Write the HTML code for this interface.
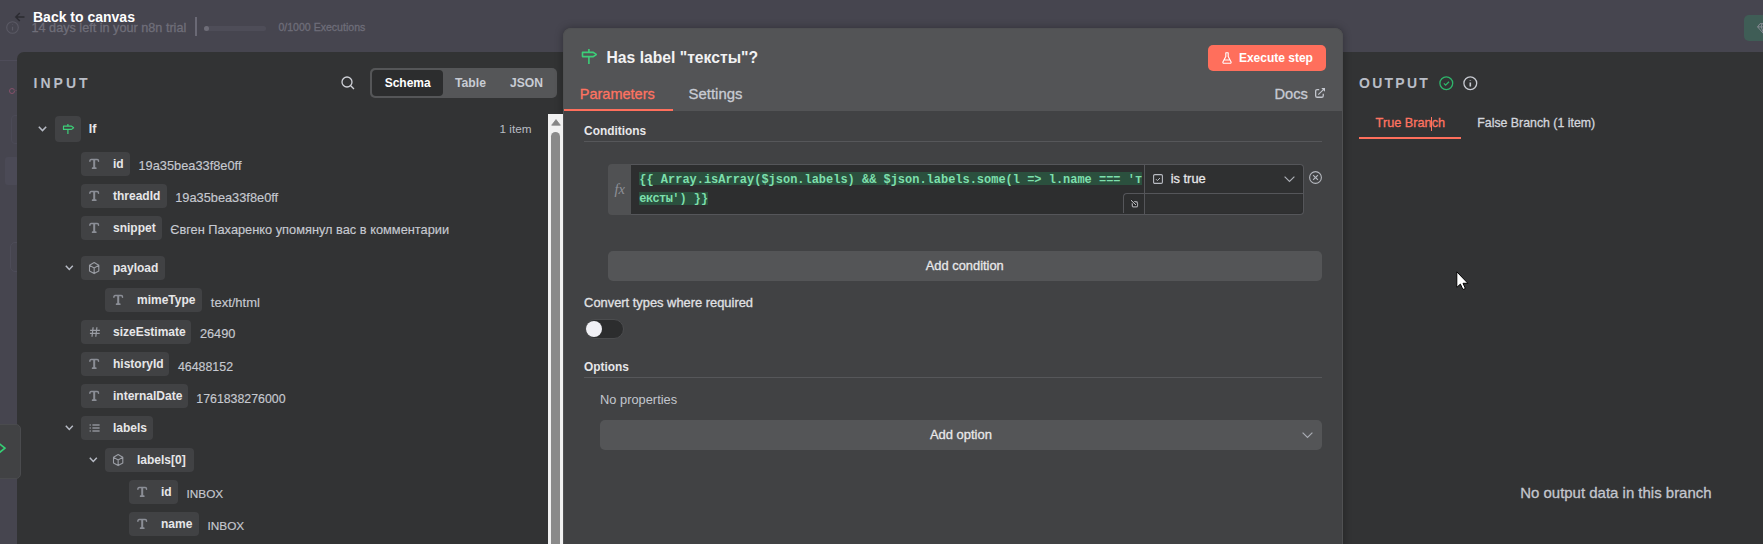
<!DOCTYPE html>
<html><head><meta charset="utf-8">
<style>
*{box-sizing:border-box;margin:0;padding:0}
html,body{width:1763px;height:544px;overflow:hidden;background:#46454f;font-family:"Liberation Sans",sans-serif}
.a{position:absolute;white-space:nowrap;line-height:1}
.b{font-weight:700}
svg{position:absolute;overflow:visible}
#left{position:absolute;left:17px;top:52px;width:560px;height:520px;background:#323334;border-top-left-radius:7px}
#right{position:absolute;left:1343px;top:52px;width:440px;height:520px;background:#323334}
#center{position:absolute;left:563px;top:28px;width:780px;height:540px;background:#414244;border-radius:8px 8px 0 0;box-shadow:0 0 9px rgba(0,0,0,.3);overflow:hidden}
#chead{position:absolute;left:0;top:0;width:780px;height:83px;background:#535456}
.pill{position:absolute;height:24px;background:#414244;border-radius:4px}
.key{font-size:12px;font-weight:700;color:#e6e6e8}
.val{font-size:12.8px;color:#c6c9d0;-webkit-text-stroke:0.15px currentColor}
.m{-webkit-text-stroke:0.3px currentColor}
.btn{position:absolute;background:#545557;border-radius:5px}
</style></head><body>

<!-- top canvas bar -->
<svg style="left:15px;top:12px" width="10" height="10" viewBox="0 0 10 10"><path d="M9.5 5H0.8M4.8 1L0.8 5L4.8 9" stroke="#2b2b31" stroke-width="1.4" fill="none"/></svg>
<svg style="left:6px;top:21px" width="13" height="13" viewBox="0 0 13 13"><circle cx="6.5" cy="6.5" r="5.8" stroke="#5a5964" stroke-width="1.1" fill="none"/><path d="M6.5 5.8v3.6M6.5 3.6v.4" stroke="#5a5964" stroke-width="1.2"/></svg>
<div class="a b" style="left:33px;top:10px;font-size:14px;color:#ffffff">Back to canvas</div>
<div class="a m" style="left:31.5px;top:22.1px;font-size:12.67px;color:#6f6e79">14 days left in your n8n trial</div>
<div class="a" style="left:195px;top:16.5px;width:1.5px;height:19.5px;background:#6a6975"></div>
<div class="a" style="left:204px;top:26.2px;width:62px;height:4.5px;border-radius:3px;background:#4e4d58"></div>
<div class="a" style="left:204px;top:26px;width:5px;height:5px;border-radius:3px;background:#6e6d78"></div>
<div class="a m" style="left:278.4px;top:22.3px;font-size:10.57px;color:#6e6d79">0/1000 Executions</div>
<div class="a" style="left:1744px;top:14.8px;width:30px;height:26px;border-radius:5px;background:#3f5d56"></div>
<svg style="left:1756.5px;top:22.5px" width="14" height="12" viewBox="0 0 14 12"><path d="M0.6 3.9L3 0.7H11L13.4 3.9L7 11.2Z M0.6 3.9H13.4M5 0.7L4.2 3.9L7 11.2M9 0.7L9.8 3.9L7 11.2" stroke="#8f8f9a" stroke-width="0.9" fill="none" stroke-linejoin="round"/></svg>

<!-- faint canvas bits -->
<div class="a" style="left:9px;top:87.7px;width:6px;height:6px;border-radius:50%;border:1.5px solid #87506a"></div>
<div class="a" style="left:14px;top:89.7px;width:4px;height:1.2px;background:#5c4a58"></div>
<div class="a" style="left:11px;top:115.3px;width:12px;height:29px;border-radius:4px;border:1px solid #4b4a56"></div>
<div class="a" style="left:5px;top:157px;width:14px;height:28px;border-radius:3px;background:#4b4a56"></div>
<div class="a" style="left:10px;top:242px;width:12px;height:30px;border-radius:5px;border:1px solid #4d4c58"></div>
<div class="a" style="left:0;top:60px;width:17px;height:1px;background:#4e4c59"></div>
<!-- left input panel -->
<div id="left"></div>
<div class="a b" style="left:33.6px;top:76.2px;font-size:14px;letter-spacing:3px;color:#b9bdc6">INPUT</div>
<svg style="left:341px;top:76px" width="14" height="14" viewBox="0 0 14 14"><circle cx="6" cy="6" r="5" stroke="#d0d2d8" stroke-width="1.3" fill="none"/><path d="M9.7 9.7L13 13" stroke="#d0d2d8" stroke-width="1.3"/></svg>
<div class="a" style="left:370px;top:68px;width:187px;height:30px;border-radius:5px;background:#555658"></div>
<div class="a" style="left:372px;top:70px;width:71px;height:26px;border-radius:4px;background:#2c2d2e"></div>
<div class="a b" style="left:384.7px;top:77.1px;font-size:12px;color:#ffffff">Schema</div>
<div class="a b" style="left:455px;top:77.1px;font-size:12.2px;color:#c8ccd4">Table</div>
<div class="a b" style="left:510px;top:77.1px;font-size:12.1px;color:#c8ccd4">JSON</div>

<!-- tree -->
<svg style="left:37.5px;top:126.3px" width="9" height="6" viewBox="0 0 9 6"><path d="M0.8 0.8L4.5 4.6L8.2 0.8" stroke="#b8bcc6" stroke-width="1.5" fill="none"/></svg>
<div class="pill" style="left:55px;top:116px;width:26px;height:26px"></div>
<svg style="left:62px;top:122px" width="13" height="13" viewBox="0 0 13 13"><path d="M5.9 1.9V4.2M5.9 7.4V11.9M1.5 4.2H9.6L11.6 5.8L9.6 7.4H1.5Z" stroke="#3ccf78" stroke-width="1.2" fill="none" stroke-linejoin="round"/></svg>
<div class="a b" style="left:88.8px;top:122.8px;font-size:12.5px;color:#e6e6e8">If</div>
<div class="a" style="left:499.5px;top:123.2px;font-size:11.75px;color:#b9bcc3">1 item</div>

<div id="tree">
<div class="pill" style="left:81px;top:152px;width:49px"></div>
<svg style="left:88.9px;top:158px" width="11" height="12" viewBox="0 0 11 12"><path d="M0.9 3.2V2.9Q0.9 1.6 2.2 1.6H8.2Q9.5 1.6 9.5 2.9V3.2" stroke="#8b8e96" stroke-width="1.5" fill="none" stroke-linecap="round"/><path d="M5.2 1.8V10.3" stroke="#8b8e96" stroke-width="2"/><path d="M3.6 10.2H6.8" stroke="#8b8e96" stroke-width="1.7" stroke-linecap="round"/></svg>
<div class="a key" style="left:113px;top:158.14px">id</div>
<div class="a val" style="left:138.5px;top:160.26px;font-size:12.8px">19a35bea33f8e0ff</div>
<div class="pill" style="left:81px;top:184px;width:85.6px"></div>
<svg style="left:88.9px;top:190px" width="11" height="12" viewBox="0 0 11 12"><path d="M0.9 3.2V2.9Q0.9 1.6 2.2 1.6H8.2Q9.5 1.6 9.5 2.9V3.2" stroke="#8b8e96" stroke-width="1.5" fill="none" stroke-linecap="round"/><path d="M5.2 1.8V10.3" stroke="#8b8e96" stroke-width="2"/><path d="M3.6 10.2H6.8" stroke="#8b8e96" stroke-width="1.7" stroke-linecap="round"/></svg>
<div class="a key" style="left:113px;top:190.14px">threadId</div>
<div class="a val" style="left:175.2px;top:192.26px;font-size:12.8px">19a35bea33f8e0ff</div>
<div class="pill" style="left:81px;top:216px;width:80.5px"></div>
<svg style="left:88.9px;top:222px" width="11" height="12" viewBox="0 0 11 12"><path d="M0.9 3.2V2.9Q0.9 1.6 2.2 1.6H8.2Q9.5 1.6 9.5 2.9V3.2" stroke="#8b8e96" stroke-width="1.5" fill="none" stroke-linecap="round"/><path d="M5.2 1.8V10.3" stroke="#8b8e96" stroke-width="2"/><path d="M3.6 10.2H6.8" stroke="#8b8e96" stroke-width="1.7" stroke-linecap="round"/></svg>
<div class="a key" style="left:113px;top:222.14px">snippet</div>
<div class="a val" style="left:170.2px;top:224.26px;font-size:12.8px">Євген Пахаренко упомянул вас в комментарии</div>
<div class="pill" style="left:81px;top:256px;width:84px"></div>
<svg style="left:88.9px;top:261.5px" width="11" height="12" viewBox="0 0 11 12"><path d="M5.15 0.6L9.8 3.3V8.9L5.15 11.6L0.5 8.9V3.3Z M0.7 3.4L5.15 6L9.6 3.4 M5.15 6V11.4" stroke="#9a9da4" stroke-width="1.1" fill="none" stroke-linejoin="round"/></svg>
<div class="a key" style="left:113px;top:262.14px">payload</div>
<svg style="left:64.7px;top:264.5px" width="9" height="6" viewBox="0 0 9 6"><path d="M0.8 0.8L4.3 4.4L7.8 0.8" stroke="#b8bcc6" stroke-width="1.5" fill="none"/></svg>
<div class="pill" style="left:105px;top:288px;width:96.7px"></div>
<svg style="left:112.9px;top:294px" width="11" height="12" viewBox="0 0 11 12"><path d="M0.9 3.2V2.9Q0.9 1.6 2.2 1.6H8.2Q9.5 1.6 9.5 2.9V3.2" stroke="#8b8e96" stroke-width="1.5" fill="none" stroke-linecap="round"/><path d="M5.2 1.8V10.3" stroke="#8b8e96" stroke-width="2"/><path d="M3.6 10.2H6.8" stroke="#8b8e96" stroke-width="1.7" stroke-linecap="round"/></svg>
<div class="a key" style="left:137px;top:294.14px">mimeType</div>
<div class="a val" style="left:210.8px;top:296.10px;font-size:13.0px">text/html</div>
<div class="pill" style="left:81px;top:320px;width:110px"></div>
<svg style="left:88.9px;top:326px" width="11" height="12" viewBox="0 0 11 12"><path d="M4.1 1.2L3.0 10.8M7.9 1.2L6.8 10.8M1.1 4.3H10.9M0.9 7.3H10.7" stroke="#9a9da4" stroke-width="1.2" fill="none"/></svg>
<div class="a key" style="left:113px;top:326.14px">sizeEstimate</div>
<div class="a val" style="left:199.9px;top:328.26px;font-size:12.8px">26490</div>
<div class="pill" style="left:81px;top:352px;width:87.8px"></div>
<svg style="left:88.9px;top:358px" width="11" height="12" viewBox="0 0 11 12"><path d="M0.9 3.2V2.9Q0.9 1.6 2.2 1.6H8.2Q9.5 1.6 9.5 2.9V3.2" stroke="#8b8e96" stroke-width="1.5" fill="none" stroke-linecap="round"/><path d="M5.2 1.8V10.3" stroke="#8b8e96" stroke-width="2"/><path d="M3.6 10.2H6.8" stroke="#8b8e96" stroke-width="1.7" stroke-linecap="round"/></svg>
<div class="a key" style="left:113px;top:358.14px">historyId</div>
<div class="a val" style="left:177.9px;top:360.60px;font-size:12.4px">46488152</div>
<div class="pill" style="left:81px;top:384px;width:107px"></div>
<svg style="left:88.9px;top:390px" width="11" height="12" viewBox="0 0 11 12"><path d="M0.9 3.2V2.9Q0.9 1.6 2.2 1.6H8.2Q9.5 1.6 9.5 2.9V3.2" stroke="#8b8e96" stroke-width="1.5" fill="none" stroke-linecap="round"/><path d="M5.2 1.8V10.3" stroke="#8b8e96" stroke-width="2"/><path d="M3.6 10.2H6.8" stroke="#8b8e96" stroke-width="1.7" stroke-linecap="round"/></svg>
<div class="a key" style="left:113px;top:390.14px">internalDate</div>
<div class="a val" style="left:196.3px;top:392.65px;font-size:12.35px">1761838276000</div>
<div class="pill" style="left:81px;top:416px;width:71.8px"></div>
<svg style="left:88.9px;top:422px" width="11" height="12" viewBox="0 0 11 12"><path d="M3.4 3H10.6M3.4 6H10.6M3.4 9H10.6M0.6 3H1.8M0.6 6H1.8M0.6 9H1.8" stroke="#8e9198" stroke-width="1.6" fill="none"/></svg>
<div class="a key" style="left:113px;top:422.14px">labels</div>
<svg style="left:64.7px;top:424.5px" width="9" height="6" viewBox="0 0 9 6"><path d="M0.8 0.8L4.3 4.4L7.8 0.8" stroke="#b8bcc6" stroke-width="1.5" fill="none"/></svg>
<div class="pill" style="left:105px;top:448px;width:89px"></div>
<svg style="left:112.9px;top:453.5px" width="11" height="12" viewBox="0 0 11 12"><path d="M5.15 0.6L9.8 3.3V8.9L5.15 11.6L0.5 8.9V3.3Z M0.7 3.4L5.15 6L9.6 3.4 M5.15 6V11.4" stroke="#9a9da4" stroke-width="1.1" fill="none" stroke-linejoin="round"/></svg>
<div class="a key" style="left:137px;top:454.14px">labels[0]</div>
<svg style="left:88.7px;top:456.5px" width="9" height="6" viewBox="0 0 9 6"><path d="M0.8 0.8L4.3 4.4L7.8 0.8" stroke="#b8bcc6" stroke-width="1.5" fill="none"/></svg>
<div class="pill" style="left:129px;top:480px;width:48.6px"></div>
<svg style="left:136.9px;top:486px" width="11" height="12" viewBox="0 0 11 12"><path d="M0.9 3.2V2.9Q0.9 1.6 2.2 1.6H8.2Q9.5 1.6 9.5 2.9V3.2" stroke="#8b8e96" stroke-width="1.5" fill="none" stroke-linecap="round"/><path d="M5.2 1.8V10.3" stroke="#8b8e96" stroke-width="2"/><path d="M3.6 10.2H6.8" stroke="#8b8e96" stroke-width="1.7" stroke-linecap="round"/></svg>
<div class="a key" style="left:161px;top:486.14px">id</div>
<div class="a val" style="left:186.5px;top:489.11px;font-size:11.8px">INBOX</div>
<div class="pill" style="left:129px;top:512px;width:70px"></div>
<svg style="left:136.9px;top:518px" width="11" height="12" viewBox="0 0 11 12"><path d="M0.9 3.2V2.9Q0.9 1.6 2.2 1.6H8.2Q9.5 1.6 9.5 2.9V3.2" stroke="#8b8e96" stroke-width="1.5" fill="none" stroke-linecap="round"/><path d="M5.2 1.8V10.3" stroke="#8b8e96" stroke-width="2"/><path d="M3.6 10.2H6.8" stroke="#8b8e96" stroke-width="1.7" stroke-linecap="round"/></svg>
<div class="a key" style="left:161px;top:518.14px">name</div>
<div class="a val" style="left:207.5px;top:521.11px;font-size:11.8px">INBOX</div>
</div><!--/tree-->

<!-- right output panel -->
<div id="right"></div>
<div class="a b" style="left:1359px;top:76.2px;font-size:14px;letter-spacing:2.25px;color:#b9bdc6">OUTPUT</div>
<svg style="left:1438.8px;top:76px" width="15" height="15" viewBox="0 0 15 15"><circle cx="7.3" cy="7.2" r="6.4" stroke="#2fb56b" stroke-width="1.3" fill="none"/><path d="M4.9 7.4l1.7 1.7 3.4-3.4" stroke="#2fb56b" stroke-width="1.3" fill="none"/></svg>
<svg style="left:1462.8px;top:76px" width="15" height="15" viewBox="0 0 15 15"><circle cx="7.3" cy="7.2" r="6.4" stroke="#c8cbd2" stroke-width="1.3" fill="none"/><path d="M7.3 6.5v4M7.3 4.2v.6" stroke="#c8cbd2" stroke-width="1.6"/></svg>
<div class="a m" style="left:1375.6px;top:117px;font-size:12.72px;color:#ff7361">True Branch</div>
<div class="a" style="left:1430.5px;top:117px;width:1px;height:13.5px;background:#ff7361"></div>
<div class="a m" style="left:1477.3px;top:117.3px;font-size:12.34px;color:#d3d6dd">False Branch (1 item)</div>
<div class="a" style="left:1359px;top:136.7px;width:102px;height:2.3px;background:#ff6f5c"></div>
<div class="a m" style="left:1520.2px;top:485.5px;font-size:14.97px;color:#c3c6ce">No output data in this branch</div>
<svg style="left:1455.6px;top:270.6px" width="13" height="20" viewBox="0 0 13 20"><path d="M0.8 0.8V16.4L4.4 13.1L6.9 18.5L9.4 17.5L7 12.3H11.9Z" fill="#ffffff" stroke="#000" stroke-width="1" stroke-linejoin="round"/></svg>

<!-- center -->
<div id="center">
  <div id="chead"></div>
  <svg style="left:18px;top:20.5px" width="17" height="16" viewBox="0 0 17 16"><path d="M7.9 0.1V3.4M7.9 7.6V14.9M1.5 3.4H12.3L15.2 5.5L12.3 7.6H1.5Z" stroke="#3ccf78" stroke-width="1.6" fill="none" stroke-linejoin="round"/></svg>
  <div class="a b" style="left:43.5px;top:21.6px;font-size:15.7px;color:#f2f2f3">Has label "тексты"?</div>
  <div class="a" style="left:645px;top:17px;width:118px;height:26px;border-radius:5px;background:#ff6f5c"></div>
  <svg style="left:659px;top:24px" width="10" height="12" viewBox="0 0 10 12"><path d="M3.5 0.8h3M3.8 0.8v3.6L0.9 10a1 1 0 0 0 .9 1.3h6.4a1 1 0 0 0 .9-1.3L6.2 4.4V0.8M1.9 8h6.2" stroke="#fff" stroke-width="1.1" fill="none" stroke-linejoin="round"/></svg>
  <div class="a b" style="left:675.9px;top:23.9px;font-size:12px;color:#ffffff">Execute step</div>
  <div class="a m" style="left:16.8px;top:58.7px;font-size:14.5px;color:#ff7361">Parameters</div>
  <div class="a m" style="left:125.6px;top:59.4px;font-size:14.9px;color:#c8cbd3">Settings</div>
  <div class="a" style="left:0;top:81px;width:110px;height:2px;background:#ff6f5c"></div>
  <div class="a m" style="left:711.4px;top:58.8px;font-size:14.7px;color:#c8cbd3">Docs</div>
  <svg style="left:752px;top:60px" width="11" height="11" viewBox="0 0 11 11"><path d="M4.2 1.65H2.2Q0.65 1.65 0.65 3.2V7.7Q0.65 9.25 2.2 9.25H6.7Q8.25 9.25 8.25 7.7V5.8" stroke="#c3c6cd" stroke-width="1.3" fill="none"/><path d="M3.3 6.6L8.6 1.3" stroke="#c3c6cd" stroke-width="1.1"/><path d="M6.3 0H10V3.7Z" fill="#c8cbd3"/></svg>

  <div class="a b" style="left:21.1px;top:98.15px;font-size:11.9px;color:#e8e8ea">Conditions</div>
  <div class="a" style="left:21px;top:113px;width:738px;height:1px;background:#56575a"></div>

  <div class="a" style="left:45px;top:136px;width:40px;height:50.5px;border-radius:4px 0 0 4px;background:#505153"></div>
  <div class="a" style="left:68px;top:136px;width:673px;height:50.5px;border-radius:0 4px 4px 0;background:#2d2e2f;border:1px solid #55565a;border-left:none"></div>
  <div class="a" style="left:51.5px;top:153.5px;font-family:'Liberation Serif';font-style:italic;font-size:14.5px;color:#8e9097">fx</div>
  <div class="a" style="left:76.3px;top:144.2px;width:503px;height:12.6px;background:#2b503e"></div>
  <div class="a" style="left:76.3px;top:163.9px;width:68.6px;height:13px;background:#2b503e"></div>
  <div class="a" style="left:76.3px;top:146.6px;font-family:'Liberation Mono';font-size:11.97px;color:#7ddfac;font-weight:700">{{ Array.isArray($json.labels) &amp;&amp; $json.labels.some(l =&gt; l.name === '<span style="letter-spacing:-0.6px">т</span></div>
  <div class="a" style="left:76.3px;top:166.2px;font-family:'Liberation Mono';font-size:11.97px;color:#7ddfac;font-weight:700"><span style="letter-spacing:-0.6px">ексты</span>') }}</div>
    <div class="a" style="left:582px;top:137px;width:157px;height:28px;background:#2f3031;border-radius:0 4px 0 0"></div>
  <div class="a" style="left:582px;top:165px;width:158px;height:1px;background:#55565a"></div>
  <div class="a" style="left:582px;top:166px;width:157px;height:19px;background:#303132;border-radius:0 0 4px 0"></div>
  <div class="a" style="left:559.8px;top:165.3px;width:22.5px;height:20px;border:1px solid #55565a;border-right:none;border-bottom:none;border-radius:4px 0 0 0;background:#2d2e2f"></div>
  <div class="a" style="left:581px;top:136px;width:1px;height:50px;background:#55565a"></div>
  <svg style="left:567px;top:171px" width="10" height="10" viewBox="0 0 10 10"><rect x="2.35" y="2.75" width="5.1" height="5.2" rx="1.3" stroke="#a3a4a8" stroke-width="1.3" fill="#1f2021"/><path d="M1.2 1.4L5.7 5.8" stroke="#1f2021" stroke-width="2.4" stroke-linecap="round"/><path d="M1.2 1.4L5.7 5.8" stroke="#d6d7da" stroke-width="1" stroke-linecap="round"/></svg>
  <svg style="left:590px;top:146px" width="10" height="10" viewBox="0 0 10 10"><rect x="0.6" y="0.6" width="8.8" height="8.8" rx="1.2" stroke="#b9bcc3" stroke-width="1.1" fill="none"/><path d="M3 5.2l1.4 1.4L7 4" stroke="#b9bcc3" stroke-width="1" fill="none"/></svg>
  <div class="a m" style="left:607.7px;top:144.62px;font-size:12.85px;color:#e6e6e8">is true</div>
  <svg style="left:720.5px;top:148.4px" width="11" height="6" viewBox="0 0 11 6"><path d="M0.6 0.6L5.5 5.4L10.4 0.6" stroke="#a9acb3" stroke-width="1.2" fill="none"/></svg>
  <svg style="left:745.6px;top:142.5px" width="13" height="13" viewBox="0 0 13 13"><circle cx="6.5" cy="6.5" r="5.9" stroke="#b4b7be" stroke-width="1.1" fill="none"/><path d="M4.1 4.1L8.9 8.9M8.9 4.1L4.1 8.9" stroke="#b4b7be" stroke-width="1.2"/></svg>

  <div class="btn" style="left:45px;top:223px;width:714px;height:30px"></div>
  <div class="a m" style="left:362.8px;top:232.01px;font-size:12.87px;color:#e8e8ea">Add condition</div>

  <div class="a m" style="left:21.1px;top:269.3px;font-size:12.88px;color:#e0e1e4">Convert types where required</div>
  <div class="a" style="left:21.7px;top:291px;width:39px;height:19.7px;border-radius:10px;background:#2c2d2e;border:1px solid #4b4c4e"></div>
  <div class="a" style="left:23px;top:292.5px;width:16px;height:16px;border-radius:8px;background:#f0f0f5"></div>

  <div class="a b" style="left:21px;top:333.9px;font-size:11.91px;color:#e6e6e8">Options</div>
  <div class="a" style="left:21px;top:349px;width:738px;height:1px;background:#56575a"></div>
  <div class="a" style="left:37.1px;top:365.6px;font-size:12.83px;color:#c3c6ce">No properties</div>
  <div class="btn" style="left:37px;top:392px;width:722px;height:30px"></div>
  <div class="a m" style="left:366.9px;top:401.22px;font-size:12.97px;color:#e8e8ea">Add option</div>
  <svg style="left:738.5px;top:404.2px" width="11" height="6" viewBox="0 0 11 6"><path d="M0.6 0.6L5.5 5.4L10.4 0.6" stroke="#a9acb3" stroke-width="1.2" fill="none"/></svg>
  <div class="a" style="left:0;top:0;width:780px;height:540px;border:1px solid #505153;border-radius:8px 8px 0 0"></div>
</div>

<!-- node tab -->
<div class="a" style="left:-6px;top:424px;width:26.5px;height:54.5px;border-radius:5px;background:#414244;border:1px solid #4a4b4e"></div>
<svg style="left:0;top:442px" width="8" height="13" viewBox="0 0 8 13"><path d="M-1 1.5L5 6.2L-1 10.9" stroke="#35cf75" stroke-width="1.7" fill="none" stroke-linejoin="round"/></svg>
<!-- scrollbar -->
<div class="a" style="left:548px;top:114px;width:15px;height:440px;background:#f1f1f1"></div>
<svg style="left:550.5px;top:118.7px" width="10" height="7" viewBox="0 0 10 7"><path d="M5 0.6L9.3 6.2H0.7z" fill="#858585" stroke="#858585" stroke-width="0.8" stroke-linejoin="round"/></svg>
<div class="a" style="left:551px;top:132px;width:9px;height:420px;border-radius:5px;background:#8a8a8a"></div>

</body></html>
